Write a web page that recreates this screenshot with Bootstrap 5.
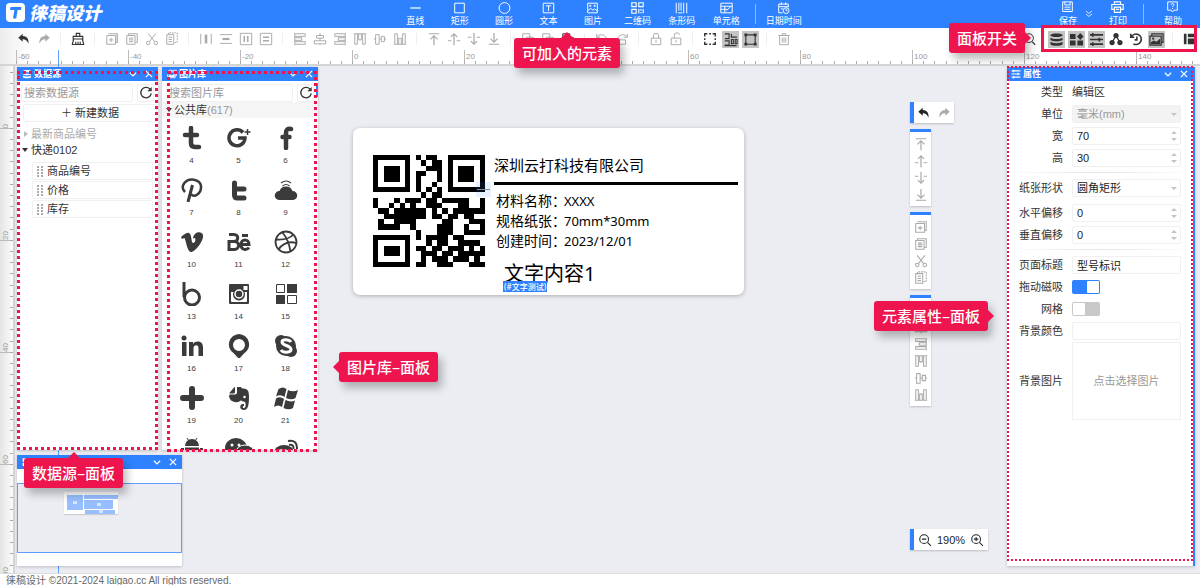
<!DOCTYPE html>
<html lang="zh-CN">
<head>
<meta charset="utf-8">
<meta name="viewport" content="width=device-width, initial-scale=1">
<title>徕稿设计</title>
<link href="https://cdn.jsdelivr.net/npm/bootstrap@5.3.0/dist/css/bootstrap.min.css" rel="stylesheet">
<style>
:root{--blue:#2f82ff;--pink:#ee154f;--ink:#333;--canvas:#ebedf3;--line:#f0f0f0}
body{font:11px/16px "Liberation Sans","Noto Sans CJK SC",sans-serif;color:var(--ink);background:#fff}
button{border:0;background:none;padding:0;color:inherit;font:inherit;line-height:inherit}
svg{display:block;flex:none}
.ico{width:14px;height:14px;fill:none;stroke:currentColor;stroke-width:1.1}
.app{height:100vh}

/* top bar */
.topbar{height:28px;background:var(--blue);color:#fff}
.brand-mark{margin:-1px 3px 0 6px}
.brand-name{font-size:18px;line-height:20px;font-weight:900;font-style:italic}
.insert{width:413px;left:calc(50% - 207px);top:0}
.insert .menu-item{flex:1 1 0}
.menu-item{font-size:9px;line-height:12px;padding-top:1px;white-space:nowrap}
.menu-item .ico{width:15px;height:14px}
.vline{width:1px;height:20px;background:#8dbaff;margin:4px 6px 0}
.session{padding-right:18px}

/* tool strip */
.tools{height:22px;color:#aaa;background:linear-gradient(90deg,#ececec,#fff 30px)}
.tools button{width:20px;height:20px;display:flex;align-items:center;justify-content:center}
.tools .lit{color:#333}
.tools .picked{color:#333}
.tools .picked svg{background:#c4c4c4;width:17px;height:17px;padding:1px}
.split{width:1px;height:12px;background:#eee;margin:0 7px 0 6px}
#strip{margin-left:14px}
#switches button:first-child{margin-right:7px}

/* rulers */
.ruler-x{height:16px;padding-left:16px;border-bottom:2px solid #d5d5d5;background:linear-gradient(90deg,#ececec,#fff 30px)}
.mark-x{flex:0 0 112px;position:relative;border-left:1px solid #bbb;font-size:8px;line-height:14px;padding-left:1px;color:#999;height:14px}
.mark-x::after{content:"";position:absolute;left:-1px;right:0;bottom:0;height:3px;background:repeating-linear-gradient(90deg,#aaa 0 1px,transparent 1px 10%)}
.ruler-y{width:15px;flex:none;border-right:2px solid #d5d5d5;background:linear-gradient(90deg,#e4e4e4,#fbfbfb)}
.mark-y{flex:0 0 112px;display:flex;align-items:flex-end;position:relative;border-bottom:1px solid #bbb;color:#999}
.mark-y:first-child{margin-top:-49px}
.mark-y span{writing-mode:vertical-rl;transform:rotate(180deg);font-size:8px;line-height:12px}
.mark-y::after{content:"";position:absolute;top:0;bottom:-1px;right:0;width:3px;background:repeating-linear-gradient(180deg,transparent 0 10px,#aaa 10px 11px,transparent 11px 10%)}
.guide{left:58px;top:50px;bottom:12px;width:1px;background:#5c9dff}
.stage{background:var(--canvas)}

/* windows on the canvas */
.win{position:absolute;background:#fff;box-shadow:0 1px 3px #0003}
.win-head{height:14px;flex:none;background:var(--blue);color:#fff;font-size:9px;line-height:14px;font-weight:700;padding:0 4px 0 5px;gap:2px}
.win-head .ico{width:10px;height:10px;stroke-width:2}
.w-data{left:17px;top:1px;width:141px;height:383px}
.w-pics{left:162px;top:1px;width:156px;height:383px}
.w-map{left:17px;top:389px;width:165px;height:111px}
.w-props{right:5px;top:1px;width:188px;bottom:7px;border-right:2px solid var(--blue)}
.field{border:1px solid var(--line);border-radius:2px;height:18px;padding:0 4px;font-size:11px;line-height:16px;background:#fff;color:#222;min-width:0;width:100%;appearance:none;-moz-appearance:textfield}
.field::placeholder{color:#999}
.field::-webkit-inner-spin-button{appearance:none;margin:0}
.field:disabled{background:#f3f3f3;color:#999;opacity:1}
.find-row{display:flex;gap:4px;padding:3px 4px 0 4px}
.find-row .field{padding-left:2px}
.sq{width:17px;height:18px;flex:none;border:1px solid var(--line);border-radius:2px}
.create{height:18px;border:1px solid var(--line);border-radius:2px;margin:2px 1px 0 6px}
.branch{display:flex;align-items:center;gap:3px;height:16px;padding-left:5px}
.leaf{height:18px;margin:0 5px 1px 15px;border:1px solid var(--line);border-radius:2px;padding-left:4px;display:flex;align-items:center;gap:4px}
.tri{width:0;height:0;border:3px solid transparent}
.tri.open{border-top:4px solid #333;border-bottom:0}
.tri.shut{border-left:4px solid #bbb;border-right:0;margin-left:2px}
.pics-title{height:16px;background:#f5f5f5;padding-left:4px;gap:2px}
.pic-grid{display:grid;grid-template-columns:repeat(3,47px);grid-auto-rows:52px;padding:8px 0 0 6px;overflow:hidden;color:#3b3b3b}
.pic-grid svg{width:24px;height:24px;fill:currentColor}
.pic-grid button{display:flex;flex-direction:column;align-items:center;font-size:8px;line-height:12px;gap:5px}
.thumb-bar{position:absolute;right:0;top:16px;width:2px;height:14px;background:var(--blue)}
.map-view{height:70px;margin-top:14px;border:1px solid #5c9dff;background:var(--canvas)}
.map-card{width:54px;height:22px;margin:8px 0 0 46px;background:#fff;box-shadow:0 1px 1px #0002;padding:3px}

/* property form */
.prop{display:grid;grid-template-columns:56px 109px;column-gap:9px;align-items:center;height:22px}
.prop>label,.prop>.cap{text-align:right}
.prop.after{margin-top:3px}
.rule{height:1px;margin:3px 0 4px;background:linear-gradient(90deg,#fff,#e4e4e4,#fff)}
.arrows{position:absolute;right:3px;top:3px;width:7px;height:12px;fill:#c4c4c4}
.toggle{appearance:none;width:28px;height:14px;margin:0;background:#c8c8c8;border-radius:2px;display:block;padding:1px}
.toggle::before{content:"";display:block;width:12px;height:12px;background:#fff;border-radius:1px}
.toggle:checked{background:var(--blue);padding-left:15px}
.pick{height:78px;border:1px solid var(--line);color:#999}

/* label being designed */
.paper{position:absolute;left:338px;top:62px;width:391px;height:167px;background:#fff;border-radius:7px;box-shadow:0 1px 4px #0004;color:#000;font-family:"Noto Sans","Noto Sans CJK SC",sans-serif;padding:27px 6px 0 20px;gap:9px}
.qr{width:112px;height:112px;shape-rendering:crispEdges}
.firm{font-size:15px;line-height:20px}
.bar{height:3px;background:#000;margin:7px 0 6px}
.spec{display:grid;grid-template-columns:68px 1fr;font-size:13px;line-height:20px;padding-left:2px;margin:0}
.spec dt{font-size:14px;font-weight:400;white-space:nowrap}
.spec dd{margin:0}
.sample{font-size:20px;line-height:24px;padding:11px 0 0 10px}
.bind{position:absolute;left:150px;top:153px;background:var(--blue);color:#fff;font-size:8px;line-height:11px;padding:0 1px;font-weight:500}
.ghost{position:absolute;left:123px;top:54px;width:15px;height:15px;background:#2f82ff1c;padding:7px 1px}
.ghost i{display:block;height:1px;background:#888}

/* floating tool palettes */
.dock{position:absolute;right:212px;top:36px;bottom:23px;width:78px;gap:6px}
.palette{background:#fff;box-shadow:0 1px 2px #0003;color:#aaa;display:flex}
.palette.h{border-left:4px solid var(--blue);height:21px;align-items:center}
.palette.steps{width:44px;justify-content:space-around}
.palette.v{border-top:3px solid var(--blue);width:21px;flex-direction:column;align-items:center;padding:3px 0}
.palette.v button{height:17px}
.palette .ico{stroke-width:1.2}
.foot{height:12px;border-top:1px solid #ddd;color:#666;font-size:10px;line-height:14px;padding-left:6px;overflow:hidden;flex:none;background:#fff}

/* guide notes */
.dots{position:absolute;border:3px dotted var(--pink);pointer-events:none}
.note{position:absolute;background:var(--pink);color:#fff;font-family:"Noto Sans CJK SC",sans-serif;font-size:15px;line-height:30px;font-weight:500;border-radius:3px;padding:0 8px;box-shadow:4px 6px 8px #0004;white-space:nowrap}
.note::before{content:"";position:absolute;border:6px solid transparent}
.note.up::before{bottom:100%;left:calc(50% - 6px);border-bottom-color:var(--pink);border-top:0}
.note.rt::before{left:100%;top:9px;border-left-color:var(--pink);border-right:0}
.note.lt::before{right:100%;top:9px;border-right-color:var(--pink);border-left:0}
.frame{position:absolute;right:3px;top:25px;width:156px;height:27px;border:3px solid var(--pink);pointer-events:none}
</style>
</head>
<body>
<svg width="0" height="0" class="position-absolute" aria-hidden="true">
<defs>
<symbol id="undo" viewBox="0 0 16 16"><path fill="currentColor" stroke="none" d="M6.500 2 1.500 6.500l5 4.500V8.300c3 0 5 1 6.500 5.200C14 8 11 4.800 6.500 4.700z"/></symbol>
<symbol id="redo" viewBox="0 0 16 16"><path fill="currentColor" stroke="none" d="M9.500 2l5 4.500-5 4.500V8.300c-3 0-5 1-6.500 5.200C2 8 5 4.800 9.500 4.700z"/></symbol>
<symbol id="broom" viewBox="0 0 16 16"><path stroke-width="1.300" d="M6 5V1.500h4V5M2.500 8V5h11v3zM3 8 1.500 14.300h13L13 8M5.500 14v-3M8 14v-3M10.500 14v-3"/></symbol>
<symbol id="copyadd" viewBox="0 0 16 16"><path d="M4 2h10v10M2 4h10v10H2zM7 6.500v5M4.500 9h5M14 2v10h-2"/></symbol>
<symbol id="pages" viewBox="0 0 16 16"><path d="M4 4V2h10v10h-2M2 4h9.500v10H2zM4.500 7h5M4.500 9h5M4.500 11h5"/></symbol>
<symbol id="cut" viewBox="0 0 16 16"><path d="M3.500 1.500 11 11M12.500 1.500 5 11"/><circle cx="3.700" cy="12.500" r="2"/><circle cx="12.300" cy="12.500" r="2"/></symbol>
<symbol id="dup" viewBox="0 0 16 16"><path d="M2 3h8v11H2zM4 6h4M4 8.500h4M4 11h4"/><path stroke-dasharray="2 1" d="M4 3V1h10v11h-4"/></symbol>
<symbol id="dh" viewBox="0 0 16 16"><path d="M2 2v12M14 2v12"/><path stroke-width="3" d="M8 3v10"/></symbol>
<symbol id="dv" viewBox="0 0 16 16"><path d="M1 3h14M1 13h14"/><path stroke-width="2.500" d="M4 8h8"/></symbol>
<symbol id="bh" viewBox="0 0 16 16"><path d="M1.500 1.500h13v13h-13z"/><path stroke-width="1.800" d="M6 4.500v7M10 4.500v7"/></symbol>
<symbol id="bv" viewBox="0 0 16 16"><path d="M1.500 1.500h13v13h-13z"/><path stroke-width="1.800" d="M4.500 6h7M4.500 10h7"/></symbol>
<symbol id="al" viewBox="0 0 16 16"><path d="M2 1v14M2 2h12v3H2M2 6.500h8v3H2M2 11h12v3H2"/></symbol>
<symbol id="ac" viewBox="0 0 16 16"><path d="M8 1v3M4 4h8v3H4zM8 7v3M1.500 10h13v3.500h-13zM8 13v2"/></symbol>
<symbol id="ar" viewBox="0 0 16 16"><path d="M14 1v14M14 2H2v3h12M14 6.500H6v3h8M14 11H2v3h12"/></symbol>
<symbol id="at" viewBox="0 0 16 16"><path d="M1 2h14M2 2v12h3V2M6.500 2v7h3V2M11 2v12h3V2"/></symbol>
<symbol id="am" viewBox="0 0 16 16"><path d="M1 8h2M3 3h4v11H3zM7 8h2.500M9.500 5H13v6H9.500zM13 8h2"/></symbol>
<symbol id="ab" viewBox="0 0 16 16"><path d="M1 14h14M2 14V2h3v12M6.500 14V7h3v7M11 14V2h3v12"/></symbol>
<symbol id="top" viewBox="0 0 16 16"><path stroke-width="1.400" d="M2 2h12M8 15V4.500M4 8.500l4-4 4 4"/></symbol>
<symbol id="upp" viewBox="0 0 16 16"><path stroke-width="1.400" d="M8 15V2M4.500 5.500 8 2l3.500 3.500M1 10h4M11 10h4"/></symbol>
<symbol id="dnn" viewBox="0 0 16 16"><path stroke-width="1.400" d="M8 1v13M4.500 10.500 8 14l3.500-3.500M1 6h4M11 6h4"/></symbol>
<symbol id="btm" viewBox="0 0 16 16"><path stroke-width="1.400" d="M2 14h12M8 1v10.500M4 7.500l4 4 4-4"/></symbol>
<symbol id="grp" viewBox="0 0 16 16"><path d="M2 2h8v8H2zM6 6h8v8H6z"/></symbol>
<symbol id="rl" viewBox="0 0 16 16"><path d="M2 2v4h4M2 6c2-4 9-4 11 1M4 9h8v5H4z"/></symbol>
<symbol id="rr" viewBox="0 0 16 16"><path d="M14 2v4h-4M14 6c-2-4-9-4-11 1M4 9h8v5H4z"/></symbol>
<symbol id="lock" viewBox="0 0 16 16"><path d="M2.500 7h11v7.500h-11zM5 7V4.500a3 3 0 0 1 6 0V7M8 9v3"/></symbol>
<symbol id="unlock" viewBox="0 0 16 16"><path d="M2.500 7h11v7.500h-11zM6 7V4.500a3 3 0 0 1 6-1M8 9v3"/></symbol>
<symbol id="sel" viewBox="0 0 16 16"><path stroke-width="1.600" d="M2 5V2h3M11 2h3v3M14 11v3h-3M5 14H2v-3M7 2h2M7 14h2M2 7v2M14 7v2"/></symbol>
<symbol id="snap" viewBox="0 0 16 16"><path stroke-width="1.200" d="M2 2h4.500v5H2M2 9.500h4.500V14H2M1.500 14.500h13M9 2v3.500h6M9 8h2v4.500H9zM13 8h2v4.500h-2z"/></symbol>
<symbol id="bbox" viewBox="0 0 16 16"><path stroke-width="1.200" d="M3 3h10v10H3z"/><path fill="currentColor" stroke="none" d="M1.500 1.500h3v3h-3zM11.500 1.500h3v3h-3zM1.500 11.500h3v3h-3zM11.500 11.500h3v3h-3z"/></symbol>
<symbol id="bin" viewBox="0 0 16 16"><path d="M1.500 4h13M6 4V2h4v2M3 4v10.500h10V4M6 6.500V12M8 6.500V12M10 6.500V12"/></symbol>
<symbol id="find" viewBox="0 0 16 16"><circle cx="8" cy="7" r="5"/><path stroke-width="1.500" d="m11.500 11 3.500 3.500"/></symbol>
<symbol id="db" viewBox="0 0 16 16"><path fill="currentColor" stroke="none" d="M1.500 3.500C1.500 1 14.500 1 14.500 3.500S1.500 6 1.500 3.500zM1.500 6c2 2 11 2 13 0v2.500c-2 2-11 2-13 0zM1.500 10.500c2 2 11 2 13 0V13c-2 2.300-11 2.300-13 0z"/></symbol>
<symbol id="parts" viewBox="0 0 16 16"><path fill="currentColor" stroke="none" d="M1 2h6v5.500H1zM1 9h6v5.500H1zM9 9h6v5.500H9zM12 1l3.500 3.700L12 8.500 8.500 4.700z"/></symbol>
<symbol id="props" viewBox="0 0 16 16"><path stroke-width="1.800" d="M1 3h14M1 8h14M1 13h14M4 1v4M11 6v4M4 11v4"/></symbol>
<symbol id="nodes" viewBox="0 0 16 16"><path stroke-width="1.500" d="M8 4 3.500 12M8 4l4.500 8"/><g fill="currentColor" stroke="none"><circle cx="8" cy="4" r="3"/><circle cx="3.500" cy="12" r="3"/><circle cx="12.500" cy="12" r="3"/></g></symbol>
<symbol id="hist" viewBox="0 0 16 16"><path stroke-width="1.800" d="M2 2v4h4M2.500 6a6 6 0 1 1 2.500 7.500M9 5v4H6.500"/></symbol>
<symbol id="photos" viewBox="0 0 16 16"><path stroke-width="1.300" d="M3 4V2h12v9h-2M1 4.500h12V14H1z"/><path fill="currentColor" stroke="none" d="M2 13v-2l3-2 3 1.500L12 7v6z"/><circle cx="4.500" cy="7" r=".7"/></symbol>
<symbol id="panes" viewBox="0 0 16 16"><path fill="currentColor" stroke="none" d="M1 2h3v12H1zM5.500 2H16v4H5.500zM5.500 7.500H16V14H5.500z"/></symbol>
<symbol id="i-line" viewBox="0 0 16 16"><path stroke-width="1.400" d="M2 8h12"/></symbol>
<symbol id="i-rect" viewBox="0 0 16 16"><path d="M2.500 2.500h11v11h-11z"/></symbol>
<symbol id="i-circ" viewBox="0 0 16 16"><circle cx="8" cy="8" r="6.200"/></symbol>
<symbol id="i-text" viewBox="0 0 16 16"><path d="M2 2.500h12v11H2zM5 5.500h6M8 5.500v6"/></symbol>
<symbol id="i-img" viewBox="0 0 16 16"><path d="M2.500 2.500h11v11h-11zM2.500 11 6 8.500l2.500 2 2-1.500 3 2.500"/><circle cx="5.500" cy="5.500" r=".8"/><circle cx="10.500" cy="5.500" r=".8"/></symbol>
<symbol id="i-qr" viewBox="0 0 16 16"><path stroke-width="1.300" d="M1.500 2h5v4.500h-5zM9.500 2h5v4.500h-5zM1.500 9.500h5V14h-5zM9.500 9v5M12 9v2M14.500 9v5M12 12.500V14"/></symbol>
<symbol id="i-bar" viewBox="0 0 16 16"><path d="M2 2v12M5 2v9M7.500 2v9M10.500 2v12M14 2v12M4 13.500h5"/></symbol>
<symbol id="i-cell" viewBox="0 0 16 16"><path d="M1.500 2.500h13v11h-13zM1.500 6h13M6 6v7.500M1.500 9.500h7M8 11l5-5"/></symbol>
<symbol id="i-date" viewBox="0 0 16 16"><path d="M13.500 7V3.500h-11v10H7M2.500 6.500h11M5.500 1.500v3M10.500 1.500v3M5 9h2.500"/><circle cx="11" cy="11" r="3.300"/><path d="M11 9v2h1.500"/></symbol>
<symbol id="save" viewBox="0 0 16 16"><path d="M2.500 1h11v11h-11zM5 1v3.500h6V1M4.500 7h7M4.500 9.500h7"/></symbol>
<symbol id="print" viewBox="0 0 16 16"><path stroke-width="1.300" d="M4.500 4V1h7v3M4 9.500H1.500V4h13v5.500H12M4.500 7h7v6h-7zM6 9.500h4"/></symbol>
<symbol id="help" viewBox="0 0 16 16"><path d="M2.500 1h11v9.500h-4L8 12.500l-1.500-2h-4zM6.300 4.500c.3-2.200 3.600-1.800 3.400 0C9.600 5.800 8 5.500 8 7M8 8v1.200"/></symbol>
<symbol id="more" viewBox="0 0 16 16"><path stroke-width="1.600" d="m2 2 6 5 6-5M2 8l6 5 6-5"/></symbol>
<symbol id="fold" viewBox="0 0 16 16"><path d="m3 6 5 5 5-5"/></symbol>
<symbol id="close" viewBox="0 0 16 16"><path d="m3 3 10 10M13 3 3 13"/></symbol>
<symbol id="reload" viewBox="0 0 16 16"><path stroke-width="1.500" d="M12.500 3.500a6 6 0 1 0 1.500 5"/><path fill="currentColor" stroke="none" d="M14.500 1v5h-5z"/></symbol>
<symbol id="zin" viewBox="0 0 16 16"><circle cx="7" cy="7" r="5"/><path d="m10.800 10.800 4 4M4.500 7h5M7 4.500v5"/></symbol>
<symbol id="zout" viewBox="0 0 16 16"><circle cx="7" cy="7" r="5"/><path d="m10.800 10.800 4 4M4.500 7h5"/></symbol>
<symbol id="grip" viewBox="0 0 6 11"><path d="M1 0v11M5 0v11" stroke="#555" stroke-dasharray="2 1"/></symbol>
</defs>
</svg>

<div class="app d-flex flex-column position-relative overflow-hidden">
<header class="topbar d-flex position-relative justify-content-between flex-shrink-0">
  <a href="#" class="d-flex text-white text-decoration-none pt-1">
    <svg class="brand-mark" width="20" height="19" viewBox="0 0 20 19"><rect width="19" height="19" rx="4" fill="#fff"/><path fill="#2f82ff" d="M4.500 4h11l-.6 3h-3.300l-1.400 8.500H7L8.400 7H4z"/></svg>
    <span class="brand-name">徕稿设计</span>
  </a>
  <nav class="insert position-absolute d-flex" aria-label="元素">
    <button class="menu-item d-flex flex-column align-items-center"><svg class="ico"><use href="#i-line"/></svg>直线</button>
    <button class="menu-item d-flex flex-column align-items-center"><svg class="ico"><use href="#i-rect"/></svg>矩形</button>
    <button class="menu-item d-flex flex-column align-items-center"><svg class="ico"><use href="#i-circ"/></svg>圆形</button>
    <button class="menu-item d-flex flex-column align-items-center"><svg class="ico"><use href="#i-text"/></svg>文本</button>
    <button class="menu-item d-flex flex-column align-items-center"><svg class="ico"><use href="#i-img"/></svg>图片</button>
    <button class="menu-item d-flex flex-column align-items-center"><svg class="ico"><use href="#i-qr"/></svg>二维码</button>
    <button class="menu-item d-flex flex-column align-items-center"><svg class="ico"><use href="#i-bar"/></svg>条形码</button>
    <button class="menu-item d-flex flex-column align-items-center"><svg class="ico"><use href="#i-cell"/></svg>单元格</button>
    <span class="vline"></span>
    <button class="menu-item d-flex flex-column align-items-center"><svg class="ico"><use href="#i-date"/></svg>日期时间</button>
  </nav>
  <div class="session d-flex">
    <button class="menu-item d-flex flex-column align-items-center"><svg class="ico"><use href="#save"/></svg>保存</button>
    <button class="px-1 me-2 ms-1" aria-label="更多"><svg class="ico" style="width:8px;height:8px"><use href="#more"/></svg></button>
    <button class="menu-item d-flex flex-column align-items-center ms-1 me-2"><svg class="ico"><use href="#print"/></svg>打印</button>
    <span class="vline ms-2 me-3"></span>
    <button class="menu-item d-flex flex-column align-items-center ms-1"><svg class="ico"><use href="#help"/></svg>帮助</button>
  </div>
</header>

<div class="tools d-flex justify-content-between align-items-center flex-shrink-0">
  <div class="d-flex align-items-center" id="strip"></div>
  <div class="d-flex align-items-center" id="switches"></div>
</div>

<div class="ruler-x d-flex overflow-hidden flex-shrink-0" id="rx"></div>

<div class="d-flex flex-fill overflow-hidden">
  <div class="ruler-y d-flex flex-column overflow-hidden" id="ry"></div>
  <main class="stage flex-fill position-relative">
    <section class="paper d-flex">
      <svg class="qr" id="qr" viewBox="0 0 21 21" role="img" aria-label="二维码"></svg>
      <div class="flex-fill">
        <div class="firm">深圳云打科技有限公司</div>
        <div class="bar"></div>
        <dl class="spec">
          <dt>材料名称：</dt><dd>XXXX</dd>
          <dt>规格纸张：</dt><dd>70mm*30mm</dd>
          <dt>创建时间：</dt><dd>2023/12/01</dd>
        </dl>
        <div class="sample">文字内容1</div>
      </div>
      <span class="bind">(#文字测试)</span>
      <span class="ghost"><i></i></span>
    </section>

    <aside class="dock d-flex flex-column align-items-start">
      <div class="palette h steps">
        <button class="text-dark" aria-label="撤销"><svg class="ico"><use href="#undo"/></svg></button>
        <button aria-label="重做"><svg class="ico"><use href="#redo"/></svg></button>
      </div>
      <div class="palette v" data-set="top upp dnn btm"></div>
      <div class="palette v" data-set="copyadd pages cut dup"></div>
      <div class="palette v" data-set="al ac ar at am ab"></div>
      <div class="palette h w-100 mt-auto justify-content-between px-1 text-dark">
        <button aria-label="缩小"><svg class="ico"><use href="#zout"/></svg></button>
        <span>190%</span>
        <button aria-label="放大"><svg class="ico"><use href="#zin"/></svg></button>
      </div>
    </aside>
  </main>
</div>
<footer class="foot">徕稿设计 ©2021-2024 laigao.cc All rights reserved.</footer>
<div class="guide position-absolute"></div>

<div class="position-absolute start-0 end-0" style="top:66px;bottom:12px;pointer-events:none">
  <section class="win w-data">
    <div class="win-head d-flex align-items-center"><svg class="ico"><use href="#db"/></svg><span class="me-auto">数据源</span><button class="me-1" aria-label="折叠"><svg class="ico"><use href="#fold"/></svg></button><button aria-label="关闭"><svg class="ico"><use href="#close"/></svg></button></div>
    <div class="find-row"><input class="field" placeholder="搜索数据源" aria-label="搜索数据源"><button class="sq d-flex align-items-center justify-content-center" aria-label="刷新"><svg class="ico"><use href="#reload"/></svg></button></div>
    <div class="d-flex"><button class="create flex-fill">＋ 新建数据</button></div>
    <div class="branch mt-1" style="color:#aaa"><span class="tri shut"></span>最新商品编号</div>
    <div class="branch mb-1"><span class="tri open"></span><span>快递0102</span></div>
    <div class="leaf"><svg width="6" height="11"><use href="#grip"/></svg>商品编号</div>
    <div class="leaf"><svg width="6" height="11"><use href="#grip"/></svg>价格</div>
    <div class="leaf"><svg width="6" height="11"><use href="#grip"/></svg>库存</div>
  </section>

  <section class="win w-pics d-flex flex-column">
    <div class="win-head d-flex align-items-center"><svg class="ico"><use href="#photos"/></svg><span class="me-auto">图片库</span><button class="me-1" aria-label="折叠"><svg class="ico"><use href="#fold"/></svg></button><button aria-label="关闭"><svg class="ico"><use href="#close"/></svg></button></div>
    <div class="find-row"><input class="field" placeholder="搜索图片库" aria-label="搜索图片库"><button class="sq d-flex align-items-center justify-content-center" aria-label="刷新"><svg class="ico"><use href="#reload"/></svg></button></div>
    <div class="pics-title d-flex align-items-center flex-shrink-0"><span class="tri open"></span><span>公共库<span style="color:#999">(617)</span></span></div>
    <div class="pic-grid">
      <button><svg viewBox="0 0 24 24"><path fill="none" stroke="#3b3b3b" stroke-width="4.500" stroke-linecap="round" d="M11 2v15q0 4 4 4h4M5 9h12"/></svg>4</button>
      <button><svg viewBox="0 0 24 24"><path fill="none" stroke="#3b3b3b" stroke-width="3.500" d="M16 6.500A8 8 0 1 0 18 12h-7"/><path fill="none" stroke="#3b3b3b" stroke-width="1.500" d="M20.500 3v6M17.500 6h6"/></svg>5</button>
      <button><svg viewBox="0 0 24 24"><path fill="none" stroke="#3b3b3b" stroke-width="4.500" stroke-linecap="round" d="M17 3q-5-1-5 4v15M8.500 11h7"/></svg>6</button>
      <button><svg viewBox="0 0 24 24"><path fill="none" stroke="#3b3b3b" stroke-width="2.500" d="M5 14Q1 10 4 5.500C9-1 20 1 21 8c.5 8-7 12-10 8"/><path fill="none" stroke="#3b3b3b" stroke-width="3" d="M12.500 7 8 24"/></svg>7</button>
      <button><svg viewBox="0 0 24 24"><path fill="none" stroke="#3b3b3b" stroke-width="5" stroke-linejoin="round" stroke-linecap="round" d="M7.500 5v12q0 3 3 3H17M8 11h9"/></svg>8</button>
      <button><svg viewBox="0 0 24 24"><path d="M5 22a4.500 4.500 0 0 1 .5-9 7 7 0 0 1 13 0 4.500 4.500 0 0 1 .5 9z"/><path fill="none" stroke="#3b3b3b" stroke-width="1.200" d="M7 5q5-4 10 0M8.500 8q3.500-3 7 0"/></svg>9</button>
      <button><svg viewBox="0 0 24 24"><path d="M1 7q6-5 8-4c3 1 2 10 4 10 2 0 3-3 2-5l-2 .5C14 1 22 1 23 5c1 6-8 17-12 17C7 22 6 10 4.500 8L2 9z"/></svg>10</button>
      <button><svg viewBox="0 0 24 24"><path fill="none" stroke="#3b3b3b" stroke-width="3" d="M2 4.500h5c5 0 5 7 0 7H2m0 0h5.500c6 0 5 8 0 8H2zM14 14.500h8c0-6-8-6-8 0 0 6 6 6 8 3M15 5.500h6"/></svg>11</button>
      <button><svg viewBox="0 0 24 24"><g fill="none" stroke="#3b3b3b" stroke-width="1.800"><circle cx="12" cy="12" r="10.500"/><path d="M8 2q7 8 8.500 20M2 9.500q12 1 17.500-5M4.500 19.500Q11 10 22.500 13"/></g></svg>12</button>
      <button><svg viewBox="0 0 24 24"><g fill="none" stroke="#3b3b3b" stroke-width="3"><path d="M4 0v15"/><circle cx="12" cy="15.500" r="7.500"/></g></svg>13</button>
      <button><svg viewBox="0 0 24 24"><path fill-rule="evenodd" d="M3 2h18q1 0 1 1v18q0 1-1 1H3q-1 0-1-1V3q0-1 1-1zm1 8v9q0 1 1 1h14q1 0 1-1v-9h-2.500a6 6 0 1 1-11 0zM16.500 4v4h4V4z"/><circle cx="12" cy="12" r="4" fill="none" stroke="#fff" stroke-width="1.500"/></svg>14</button>
      <button><svg viewBox="0 0 24 24"><path d="M13 2h10v9H13zM2 13h9v9H2z"/><path fill="none" stroke="#3b3b3b" d="M2.500 2.500h8v8h-8zM13.500 13.500h9v8h-9z"/></svg>15</button>
      <button><svg viewBox="0 0 24 24"><circle cx="4" cy="4" r="2.500"/><path d="M2 8h4.500v14H2zM9 8h4v2c3-4 10-3 10 3v9h-4.500v-8c0-4-5-3-5 0v8H9z"/></svg>16</button>
      <button><svg viewBox="0 0 24 24"><path fill-rule="evenodd" d="M12 0a10.500 10.500 0 0 1 5 19.500L12 25l-5-5.500A10.500 10.500 0 0 1 12 0zm0 5a6 6 0 1 0 0 12 6 6 0 0 0 0-12z"/></svg>17</button>
      <button><svg viewBox="0 0 24 24"><circle cx="7" cy="7" r="6"/><circle cx="17" cy="17" r="6"/><circle cx="12" cy="12" r="10"/><path fill="none" stroke="#fff" stroke-width="3" d="M17 8c-2-3-9-3-9 0 0 4 9 3 9 7.500 0 3.500-8 3.500-10 .5"/></svg>18</button>
      <button><svg viewBox="0 0 24 24"><path fill="none" stroke="#3b3b3b" stroke-width="6" stroke-linecap="round" d="M12 3v18M3 12h18"/></svg>19</button>
      <button><svg viewBox="0 0 24 24"><path d="M8 1v5q0 1.500-1.500 1.500H2L7 1.500zM10 1h4l1 1.500c6 0 7 2 7 9S21 24 17 24c-5 0-5-7 0-6v2c-2 0-1.500 2 0 2 2 0 2-4 1-6-2-.5-4-1-4-2-1 3-9 3-11-1-1-2-1.500-4 0-4.500h5q2 0 2-2z"/><circle cx="17.500" cy="11" r="1.300" fill="#fff"/></svg>20</button>
      <button><svg viewBox="0 0 24 24"><path d="M4.500 3Q9 0 12.500 3l-2 8q-4-3-8.500-.5zM14 4q5 2.500 10 0l-2.500 8q-4 2.500-9.500 0zM2 12.500q4-2.500 8 .5l-2 8q-4-3-8 0zM11.500 14q5 2.500 9.500.5L19 22q-4 2.500-9.500 0z"/></svg>21</button>
      <button aria-label="Android"><svg viewBox="0 0 24 24"><path d="M5 8a7 7 0 0 1 14 0zM5 9.500h14V24H5zM1 10h3v9H1zM20 10h3v9h-3z"/><path fill="none" stroke="#3b3b3b" d="m7 0 2 3M17 0l-2 3"/></svg></button>
      <button aria-label="WeChat"><svg viewBox="0 0 24 24" style="overflow:visible"><ellipse cx="9" cy="10" rx="11" ry="10"/><ellipse cx="18" cy="15" rx="9.500" ry="8" stroke="#fff"/><g fill="#fff"><circle cx="5" cy="7" r="1.500"/><circle cx="12" cy="7" r="1.500"/><circle cx="15" cy="13" r="1.200"/><circle cx="21" cy="13" r="1.200"/></g></svg></button>
      <button aria-label="微博"><svg viewBox="0 0 24 24"><ellipse cx="10" cy="15" rx="10" ry="8"/><ellipse cx="9" cy="16" rx="7" ry="5" fill="#fff"/><circle cx="9" cy="16" r="3"/><path fill="none" stroke="#3b3b3b" stroke-width="2" d="M14 3q9-2 9 8M15 7q5-1 4.500 4"/></svg></button>
    </div>
    <span class="thumb-bar"></span>
  </section>

  <section class="win w-map">
    <div class="win-head d-flex align-items-center"><svg class="ico"><use href="#parts"/></svg><span class="me-auto"></span><button class="me-1" aria-label="折叠"><svg class="ico"><use href="#fold"/></svg></button><button aria-label="关闭"><svg class="ico"><use href="#close"/></svg></button></div>
    <div class="map-view overflow-hidden"><div class="map-card"><svg width="51" height="19"><path fill="#97bfff" d="M0 0h16v15H0zM17 0h34v4H17zM17 5h29v9H17zM18 15h30v4H18z"/><path fill="#d5e5ff" d="M6 6h4v3H6zM30 8h4v3h-4zM32 15h4v3h-4z"/></svg></div></div>
  </section>

  <form class="win w-props">
    <div class="win-head d-flex align-items-center px-1"><svg class="ico"><use href="#props"/></svg><span class="me-auto">属性</span><button type="button" class="me-1" aria-label="折叠"><svg class="ico"><use href="#fold"/></svg></button><button type="button" aria-label="关闭"><svg class="ico"><use href="#close"/></svg></button></div>
    <div class="prop"><span class="cap">类型</span><span>编辑区</span></div>
    <div class="prop"><label for="unit">单位</label><div class="position-relative"><select class="field" id="unit" disabled><option>毫米(mm)</option></select><svg class="arrows"><path d="M0 5h6L3 8z"/></svg></div></div>
    <div class="prop"><label for="w">宽</label><div class="position-relative"><input class="field" type="number" id="w" value="70"><svg class="arrows"><path d="M0 4h6L3 1zM0 8h6l-3 3z"/></svg></div></div>
    <div class="prop"><label for="h">高</label><div class="position-relative"><input class="field" type="number" id="h" value="30"><svg class="arrows"><path d="M0 4h6L3 1zM0 8h6l-3 3z"/></svg></div></div>
    <div class="rule"></div>
    <div class="prop"><label for="shape">纸张形状</label><div class="position-relative"><select class="field" id="shape"><option>圆角矩形</option></select><svg class="arrows"><path d="M0 5h6L3 8z"/></svg></div></div>
    <div class="prop after"><label for="ox">水平偏移</label><div class="position-relative"><input class="field" type="number" id="ox" value="0"><svg class="arrows"><path d="M0 4h6L3 1zM0 8h6l-3 3z"/></svg></div></div>
    <div class="prop"><label for="oy">垂直偏移</label><div class="position-relative"><input class="field" type="number" id="oy" value="0"><svg class="arrows"><path d="M0 4h6L3 1zM0 8h6l-3 3z"/></svg></div></div>
    <div class="rule"></div>
    <div class="prop"><label for="ttl">页面标题</label><input class="field" id="ttl" value="型号标识"></div>
    <div class="prop"><label for="mag">拖动磁吸</label><input class="toggle" type="checkbox" id="mag" checked></div>
    <div class="prop"><label for="grid">网格</label><input class="toggle" type="checkbox" id="grid"></div>
    <div class="prop"><label for="bg">背景颜色</label><input class="field" id="bg"></div>
    <div class="prop h-auto"><span class="cap">背景图片</span><button type="button" class="pick">点击选择图片</button></div>
  </form>
</div>

<div class="dots" style="left:17px;top:71px;width:141px;height:379px"></div>
<div class="dots" style="left:167px;top:71px;width:150px;height:381px"></div>
<div class="dots" style="right:7px;top:66px;width:186px;bottom:24px;border-width:2px"></div>
<div class="frame"></div>
<div class="note up" style="left:calc(50% - 86px);top:38px">可加入的元素</div>
<div class="note rt" style="right:175px;top:23px">面板开关</div>
<div class="note lt" style="left:339px;top:352px">图片库–面板</div>
<div class="note up" style="left:24px;top:458px">数据源–面板</div>
<div class="note rt" style="right:212px;top:301px">元素属性–面板</div>
</div>

<script src="https://cdn.jsdelivr.net/npm/bootstrap@5.3.0/dist/js/bootstrap.bundle.min.js"></script>
<script>
const icon = n => `<svg class="ico"><use href="#${n}"/></svg>`;
const tool = n => {
  const cls = n.startsWith('*') ? 'picked' : n.startsWith('!') ? 'lit' : '';
  const name = n.replace(/[*!]/, '');
  return n === '|' ? '<span class="split"></span>' : `<button class="${cls}" aria-label="${name}">${icon(name)}</button>`;
};
const fill = (id, list) => document.getElementById(id).innerHTML = list.split(' ').map(tool).join('');
fill('strip', '!undo redo | !broom | copyadd pages cut dup | dh dv bh bv | al ac ar at am ab | top upp dnn btm | grp grp !grp | rl rr | lock unlock | !sel *snap *bbox | bin');
fill('switches', '!find *db *parts *props !nodes !hist *photos | !panes');
document.querySelectorAll('[data-set]').forEach(p => p.innerHTML = p.dataset.set.split(' ').map(n => `<button aria-label="${n}">${icon(n)}</button>`).join(''));
for (let v = -60; v <= 140; v += 20) rx.innerHTML += `<div class="mark-x">${v}</div>`;
for (let v = 0; v <= 80; v += 20) ry.innerHTML += `<div class="mark-y"><span>${v}</span></div>`;
const code = [
  '111111101011001111111','100000100101101000001','101110100011101011101','101110101100101011101',
  '101110101000101011101','100000101001001000001','111111101010101111111','000000000101100000000',
  '100010111011011111001','100101010011100011001','011011111101010111111','001111111101101101100',
  '010011110000011000111','011110010000111001001','000000001000111001111','111111101011110110000',
  '100000100010110011110','101110101101101110101','101110100111011011111','101110100010001110111',
  '100000101101110111000'];
code[20] = '111111101100111000111';
code[19] = '100000100101110111010';
qr.innerHTML = `<path d="${code.map((r, y) => [...r].map((c, x) => c === '1' ? `M${x} ${y}h1v1h-1z` : '').join('')).join('')}"/>`;
</script>
</body>
</html>
